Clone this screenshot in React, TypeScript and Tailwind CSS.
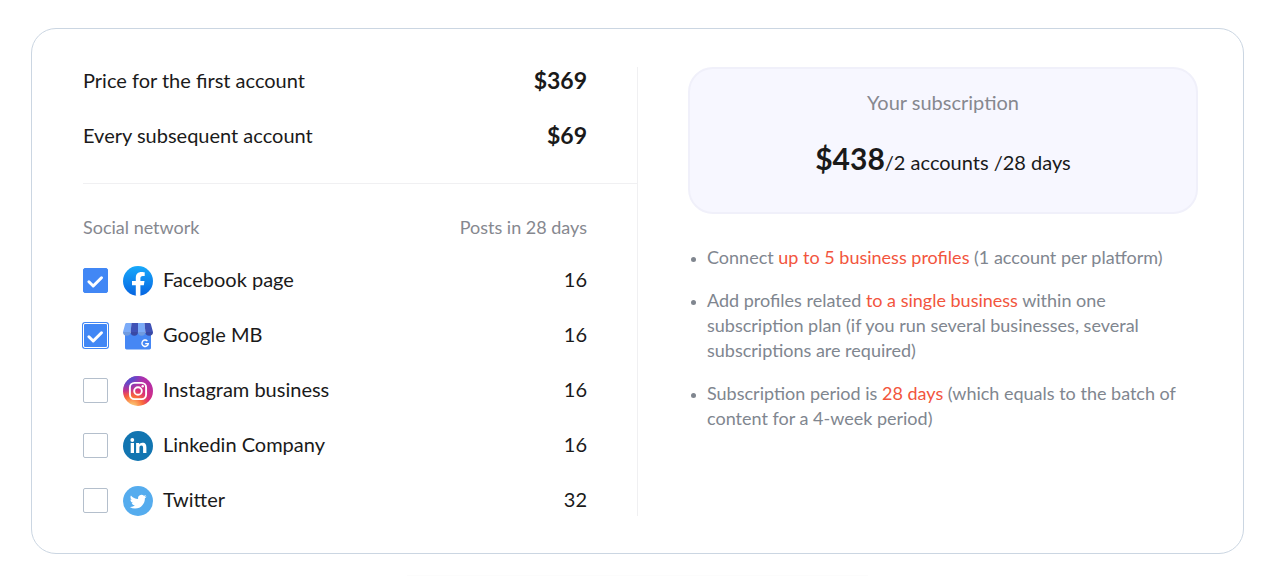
import { useState } from "react";

function FacebookIcon() {
  return (
    <svg viewBox="0 0 30 30" className="size-[30px] shrink-0" aria-hidden="true">
      <defs>
        <linearGradient id="fb" x1="0" y1="0" x2="0" y2="1">
          <stop offset="0" stopColor="#18a9fa" />
          <stop offset="1" stopColor="#0664e1" />
        </linearGradient>
      </defs>
      <circle cx="15" cy="15" r="15" fill="url(#fb)" />
      <path
        d="M20.8 19.3l.7-4.3h-4.1v-2.8c0-1.2.6-2.3 2.4-2.3h1.9V6.2s-1.7-.3-3.3-.3c-3.4 0-5.6 2.1-5.6 5.8V15H9v4.3h3.8v10.5a15 15 0 0 0 4.6 0V19.3h3.4z"
        fill="#fff"
      />
    </svg>
  );
}

function GoogleBusinessIcon() {
  return (
    <svg viewBox="0 0 30 30" className="size-[30px] shrink-0" aria-hidden="true">
      <path d="M2 12h26v14.8c0 .9-.7 1.6-1.6 1.6H3.6c-.9 0-1.6-.7-1.6-1.6z" fill="#4687f4" />
      <path d="M3.6 2h4.9L7.6 11H0L2.1 3.2C2.3 2.4 2.9 2 3.6 2z" fill="#7babf8" />
      <path d="M8.5 2H15v9H7.6z" fill="#3f51b5" />
      <path d="M15 2h6.5l.9 9H15z" fill="#7babf8" />
      <path d="M21.5 2h4.9c.7 0 1.3.4 1.5 1.2L30 11h-7.6z" fill="#3f51b5" />
      <path d="M0 11h7.6a3.8 3.8 0 0 1-7.6 0z" fill="#709be0" />
      <path d="M7.6 11H15a3.7 3.7 0 0 1-7.4 0z" fill="#3949a4" />
      <path d="M15 11h7.4a3.7 3.7 0 0 1-7.4 0z" fill="#709be0" />
      <path d="M22.4 11H30a3.8 3.8 0 0 1-7.6 0z" fill="#3949a4" />
      <path
        d="M24.4 20a3.2 3.2 0 1 0 .9 2.6h-3.1"
        fill="none"
        stroke="#fff"
        strokeWidth="1.4"
      />
    </svg>
  );
}

function InstagramIcon() {
  return (
    <svg viewBox="0 0 30 30" className="size-[30px] shrink-0" aria-hidden="true">
      <defs>
        <radialGradient id="ig-warm" cx="0.3" cy="1.05" r="1">
          <stop offset="0" stopColor="#f5d08a" />
          <stop offset="0.15" stopColor="#fbb566" />
          <stop offset="0.38" stopColor="#f9693a" />
          <stop offset="0.62" stopColor="#d92d7a" />
          <stop offset="1" stopColor="#b32ea8" />
        </radialGradient>
        <radialGradient id="ig-cool" cx="0.15" cy="0" r="0.6">
          <stop offset="0" stopColor="#4a55d6" />
          <stop offset="0.4" stopColor="#5b4ccc" stopOpacity="0.9" />
          <stop offset="1" stopColor="#8a3ac8" stopOpacity="0" />
        </radialGradient>
      </defs>
      <circle cx="15" cy="15" r="15" fill="url(#ig-warm)" />
      <circle cx="15" cy="15" r="15" fill="url(#ig-cool)" />
      <g fill="none" stroke="#fff" strokeWidth="1.9">
        <rect x="6.9" y="6.9" width="16.2" height="16.2" rx="4.6" />
        <circle cx="15" cy="15" r="3.8" />
      </g>
      <circle cx="19.7" cy="10.3" r="1.2" fill="#fff" />
    </svg>
  );
}

function LinkedinIcon() {
  return (
    <svg viewBox="0 0 30 30" className="size-[30px] shrink-0" aria-hidden="true">
      <circle cx="15" cy="15" r="15" fill="#1275b1" />
      <circle cx="9.3" cy="9" r="1.9" fill="#fff" />
      <path
        d="M7.7 12h3.3v10H7.7zM13.1 12h3.1v1.4c.5-.9 1.6-1.7 3.2-1.7 3.3 0 4 2.1 4 4.9V22h-3.3v-4.8c0-1.2 0-2.7-1.7-2.7s-2 1.3-2 2.6V22h-3.3z"
        fill="#fff"
      />
    </svg>
  );
}

function TwitterIcon() {
  return (
    <svg viewBox="0 0 30 30" className="size-[30px] shrink-0" aria-hidden="true">
      <circle cx="15" cy="15" r="15" fill="#55acee" />
      <path
        transform="translate(6.8 7.2) scale(0.7)"
        d="M23.953 4.57a10 10 0 0 1-2.825.775 4.958 4.958 0 0 0 2.163-2.723c-.951.555-2.005.959-3.127 1.184a4.92 4.92 0 0 0-8.384 4.482C7.69 8.095 4.067 6.13 1.64 3.162a4.822 4.822 0 0 0-.666 2.475c0 1.71.87 3.213 2.188 4.096a4.904 4.904 0 0 1-2.228-.616v.06a4.923 4.923 0 0 0 3.946 4.827 4.996 4.996 0 0 1-2.212.085 4.936 4.936 0 0 0 4.604 3.417 9.867 9.867 0 0 1-6.102 2.105c-.39 0-.779-.023-1.17-.067a13.995 13.995 0 0 0 7.557 2.209c9.053 0 13.998-7.496 13.998-13.985 0-.21 0-.42-.015-.63A9.935 9.935 0 0 0 24 4.59z"
        fill="#fff"
      />
    </svg>
  );
}

const networks = [
  { id: "facebook", label: "Facebook page", posts: 16, Icon: FacebookIcon },
  { id: "google", label: "Google MB", posts: 16, Icon: GoogleBusinessIcon },
  { id: "instagram", label: "Instagram business", posts: 16, Icon: InstagramIcon },
  { id: "linkedin", label: "Linkedin Company", posts: 16, Icon: LinkedinIcon },
  { id: "twitter", label: "Twitter", posts: 32, Icon: TwitterIcon },
];

const notes = [
  { before: "Connect ", accent: "up to 5 business profiles", after: " (1 account per platform)" },
  {
    before: "Add profiles related ",
    accent: "to a single business",
    after: " within one subscription plan (if you run several businesses, several subscriptions are required)",
  },
  {
    before: "Subscription period is ",
    accent: "28 days",
    after: " (which equals to the batch of content for a 4-week period)",
  },
];

const FIRST_PRICE = 369;
const NEXT_PRICE = 69;

export default function App() {
  const [selected, setSelected] = useState(["facebook", "google"]);
  const [active, setActive] = useState("google");

  const count = selected.length;
  const total = count === 0 ? 0 : FIRST_PRICE + (count - 1) * NEXT_PRICE;

  function toggle(id: string) {
    setActive(id);
    setSelected((prev) => (prev.includes(id) ? prev.filter((x) => x !== id) : [...prev, id]));
  }

  return (
    <main className="px-[31px] pt-7 bg-white font-['Lato','Carlito',sans-serif] text-[#1a1a1a]">
      <section className="grid grid-cols-[111fr_112fr] rounded-[25px] border border-[#cbd6e2] pt-[38px] pb-[37px] pl-[51px] pr-[45px]">
        {/* Prices and networks */}
        <div className="border-r border-[#f0f0f2]">
          <dl className="flex flex-col gap-[29px] border-b border-[#f0f0f2] pr-[50px] pb-[35px] text-xl leading-[26px]">
            <div className="flex justify-between">
              <dt>Price for the first account</dt>
              <dd className="text-[23px] leading-[26px] font-bold">${FIRST_PRICE}</dd>
            </div>
            <div className="flex justify-between">
              <dt>Every subsequent account</dt>
              <dd className="text-[23px] leading-[26px] font-bold">${NEXT_PRICE}</dd>
            </div>
          </dl>

          <div className="pr-[50px] pt-[31px]">
            <table className="w-full text-xl leading-[26px]">
              <thead>
                <tr className="text-lg leading-[25px] text-[#86888f]">
                  <th className="p-0 pb-px text-left font-normal">Social network</th>
                  <th className="p-0 pb-px text-right font-normal">Posts in 28 days</th>
                </tr>
              </thead>
              <tbody>
                {networks.map(({ id, label, posts, Icon }) => (
                  <tr key={id} className="align-top">
                    <td className="p-0 pt-[25px]">
                      <label className="flex items-start cursor-pointer">
                        <span className="relative mt-0.5 mr-[15px] size-[25px] shrink-0">
                          <input
                            type="checkbox"
                            checked={selected.includes(id)}
                            onChange={() => toggle(id)}
                            className={`peer block size-[25px] appearance-none rounded-[2px] border border-[#b4bfcc] bg-white checked:border-[#4187f5] checked:bg-[#4187f5] outline-none ${
                              active === id ? "ring-1 ring-[#4187f5] border-white!" : ""
                            }`}
                          />
                          <svg
                            viewBox="0 0 25 25"
                            className="pointer-events-none absolute inset-0 hidden peer-checked:block"
                            fill="none"
                            stroke="#fff"
                            strokeWidth="3"
                            strokeLinecap="round"
                            strokeLinejoin="round"
                            aria-hidden="true"
                          >
                            <path d="M5.9 13.8l4.3 4.2 8.3-8.2" />
                          </svg>
                        </span>
                        <Icon />
                        <span className="ml-2.5">{label}</span>
                      </label>
                    </td>
                    <td className="p-0 pt-[25px] text-right">{posts}</td>
                  </tr>
                ))}
              </tbody>
            </table>
          </div>
        </div>

        {/* Summary */}
        <div className="pl-[50px]">
          <div className="flex flex-col items-center gap-7 rounded-[25px] border-2 border-[#f0f0fa] bg-[#f7f7ff] pt-5 pb-8">
            <h2 className="text-xl leading-[26px] text-[#86888f]">Your subscription</h2>
            <p className="text-xl leading-9">
              <strong className="text-3xl leading-none font-bold">${total}</strong>/{count} accounts /28 days
            </p>
          </div>

          <ul className="mt-[31px] flex flex-col gap-[18px] pl-[3px] pr-5 text-lg leading-[25px] text-[#80868f]">
            {notes.map(({ before, accent, after }) => (
              <li
                key={accent}
                className="flex gap-[11px] before:mt-3 before:size-[5px] before:shrink-0 before:rounded-full before:bg-[#80868f]"
              >
                <p>
                  {before}
                  <span className="text-[#f2553d]">{accent}</span>
                  {after}
                </p>
              </li>
            ))}
          </ul>
        </div>
      </section>

      {/* Top edge of the next block */}
      <div className="mx-auto mt-[21px] h-px w-[38%] bg-[#fcfcfc]" />
    </main>
  );
}
